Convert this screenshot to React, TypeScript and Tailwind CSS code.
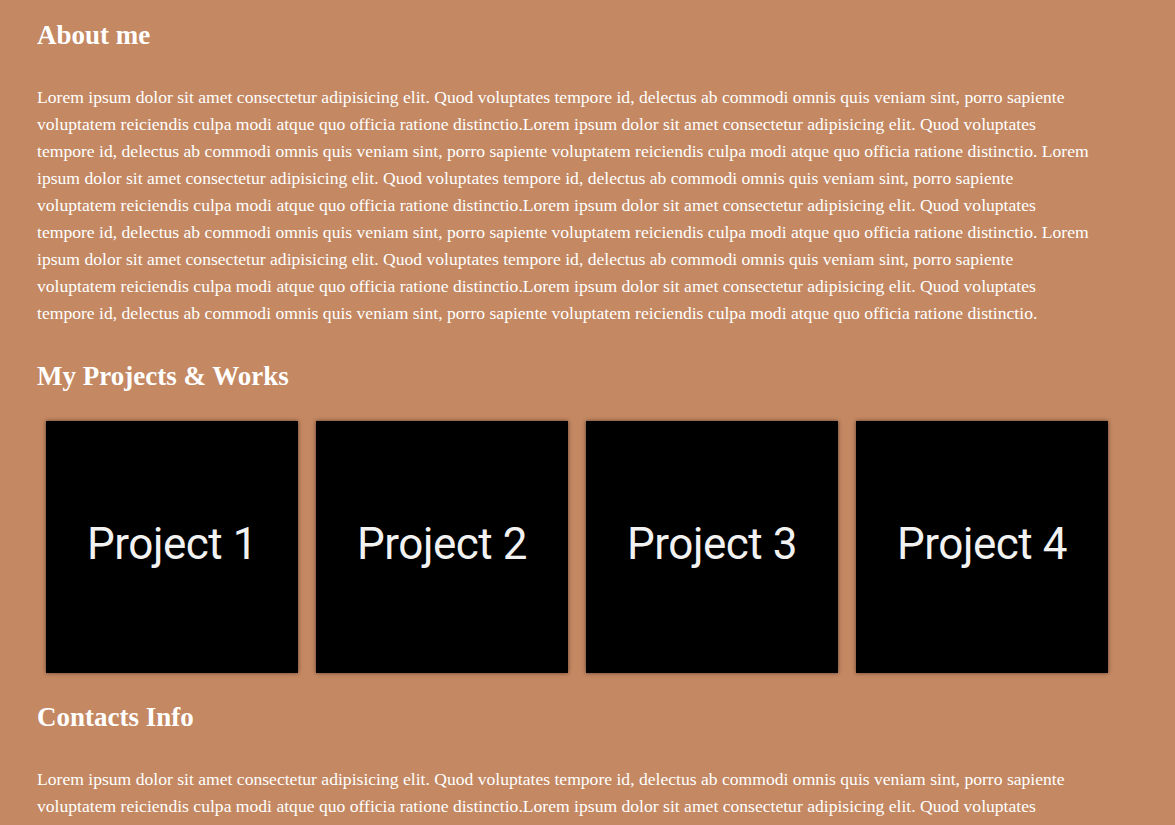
// line breaks follow the reference layout
const l1 =
  "Lorem ipsum dolor sit amet consectetur adipisicing elit. Quod voluptates tempore id, delectus ab commodi omnis quis veniam sint, porro sapiente";
const l2 =
  "voluptatem reiciendis culpa modi atque quo officia ratione distinctio.Lorem ipsum dolor sit amet consectetur adipisicing elit. Quod voluptates";
const l3 =
  "tempore id, delectus ab commodi omnis quis veniam sint, porro sapiente voluptatem reiciendis culpa modi atque quo officia ratione distinctio. Lorem";
const l4 =
  "ipsum dolor sit amet consectetur adipisicing elit. Quod voluptates tempore id, delectus ab commodi omnis quis veniam sint, porro sapiente";
const l9 =
  "tempore id, delectus ab commodi omnis quis veniam sint, porro sapiente voluptatem reiciendis culpa modi atque quo officia ratione distinctio.";

const lines = [l1, l2, l3, l4, l2, l3, l4, l2, l9];

const projects = ["Project 1", "Project 2", "Project 3", "Project 4"];

function Filler() {
  return (
    <p className="mt-[34px] text-[17.6px] leading-[27px]">
      {lines.map((line, i) => (
        <span key={i} className="block whitespace-nowrap">
          {line}{" "}
        </span>
      ))}
    </p>
  );
}

export default function App() {
  return (
    <div className="min-h-screen bg-[#c48862] pl-[37px] pr-[57px] pt-[20px] pb-10 font-['Liberation_Serif',serif] text-white">
      <h2 className="text-[27px] leading-[30px] font-bold">About me</h2>
      <Filler />

      <h2 className="mt-[34px] text-[27px] leading-[30px] font-bold">
        My Projects &amp; Works
      </h2>
      <div className="mt-[30px] flex gap-[18px] pl-[9px]">
        {projects.map((name) => (
          <div
            key={name}
            className="flex h-[252px] w-[252px] shrink-0 items-center justify-center bg-black shadow-[0_0_4px_rgba(0,0,0,0.55)]"
          >
            <span className="mt-[-6px] font-['Roboto',sans-serif] text-[44px] tracking-[-0.5px] text-[#f2f2f2]">
              {name}
            </span>
          </div>
        ))}
      </div>

      <h2 className="mt-[29px] text-[27px] leading-[30px] font-bold">Contacts Info</h2>
      <Filler />
    </div>
  );
}
